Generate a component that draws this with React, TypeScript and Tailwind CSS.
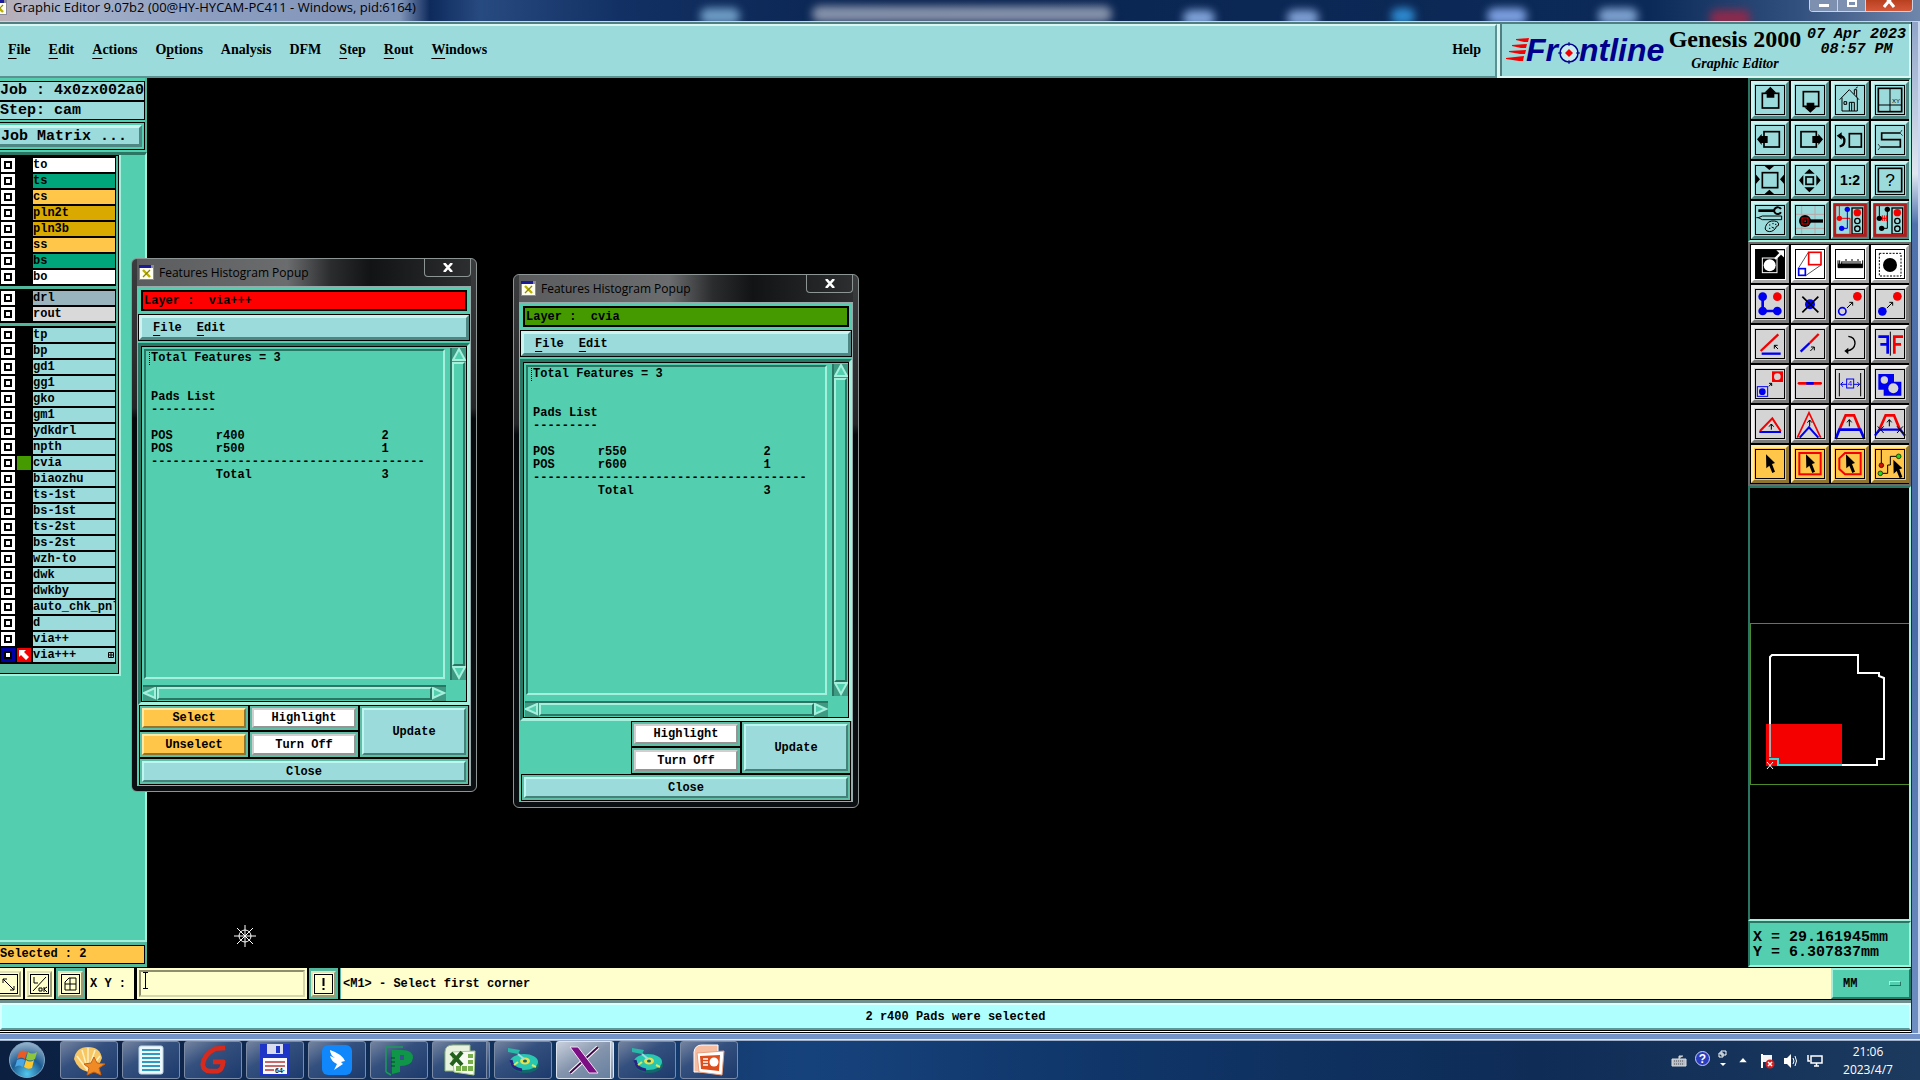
import React from "react";

const MONO = "font-['Liberation_Mono',monospace] font-bold";
const SERIF = "font-['Liberation_Serif',serif] font-bold";
const SANS = "font-['Open_Sans',sans-serif]";

const BEVEL_CYAN =
  "bg-[#9cdbdb] border-[3px] border-t-[#cdf3ee] border-l-[#cdf3ee] border-b-[#4d8683] border-r-[#4d8683]";

/* ---------- title bar and menu ---------- */

function XIcon() {
  return (
    <svg width="15" height="15" viewBox="0 0 15 15" className="shrink-0">
      <rect x="0" y="0" width="15" height="15" fill="#8a8a9a" />
      <rect x="1" y="3" width="13" height="11" fill="#fdfdf2" />
      <rect x="0" y="0" width="12" height="3" fill="#1a1a9a" />
      <path d="M4 5 L11 12" stroke="#b8b000" strokeWidth="2.4" />
      <path d="M11 5 L4 12" stroke="#8c8600" strokeWidth="1.2" />
    </svg>
  );
}

function TitleBar() {
  return (
    <header className="relative flex h-[22px] shrink-0 items-start overflow-hidden border-b border-[#c9d2e6] bg-[linear-gradient(90deg,#b9aeb6_0px,#a9b4cb_60px,#8d9ec0_200px,#8094b8_400px,#0e2a5c_430px,#274a80_480px,#123063_620px,#0a2450_900px,#0b2754_1250px,#0c2a58_1650px,#33517f_1800px,#6f86ab_1920px)]">
      <div className="pointer-events-none absolute inset-0 flex items-start justify-between pl-[700px] pr-[170px] blur-[4px]">
        <i className="mt-[8px] h-4 w-10 rounded-full bg-[#6d9bc4]" />
        <i className="mt-[6px] h-4 w-[300px] rounded-full bg-[#8793ab]" />
        <i className="mt-[10px] h-4 w-8 rounded-full bg-[#7fa2d8]" />
        <i className="mt-[10px] h-4 w-8 rounded-full bg-[#7f9fd4]" />
        <i className="mt-[8px] h-4 w-6 rounded-full bg-[#2e8ad0]" />
        <i className="mt-[8px] h-4 w-10 rounded-full bg-[#7c9fe0]" />
        <i className="mt-[8px] h-4 w-10 rounded-full bg-[#7ca0cf]" />
        <i className="mt-[10px] h-4 w-10 rounded-md bg-[#8c2a4c]" />
      </div>
      <div className="relative -ml-2 flex items-center gap-[6px]">
        <XIcon />
        <span className={`${SANS} text-[13px] leading-[13px] text-black`}>
          Graphic Editor 9.07b2 (00@HY-HYCAM-PC411 - Windows, pid:6164)
        </span>
      </div>
      <div className="relative ml-auto mr-[7px] flex h-[12px] overflow-hidden rounded-b border border-t-0 border-[#c9d4e6]">
        <button aria-label="Minimize" className="flex w-7 items-center justify-center border-r border-[#c9d4e6] bg-[#7d90b0]">
          <i className="h-[3px] w-[10px] bg-white" />
        </button>
        <button aria-label="Maximize" className="flex w-7 items-start justify-center border-r border-[#c9d4e6] bg-[#7d90b0]">
          <i className="h-[7px] w-[10px] border-2 border-white" />
        </button>
        <button aria-label="Close window" className="flex w-[46px] items-start justify-center bg-[linear-gradient(#b8401f,#d4583a)]">
          <svg width="12" height="8" viewBox="0 0 12 8"><path d="M1 7 L10 -4 M2 -4 L11 7" stroke="#fff" strokeWidth="3" /></svg>
        </button>
      </div>
    </header>
  );
}

const MENUS: [string, string, string][] = [
  ["", "F", "ile"],
  ["", "E", "dit"],
  ["", "A", "ctions"],
  ["O", "p", "tions"],
  ["Analysis", "", ""],
  ["DFM", "", ""],
  ["", "S", "tep"],
  ["", "R", "out"],
  ["", "W", "indows"],
];

function FrontlineLogo() {
  return (
    <svg width="160" height="32" viewBox="0 -2 160 32" aria-label="Frontline" className="shrink-0 overflow-visible">
      <g fill="#f40000">
        <path d="M10 3 L23 2 L22 6 L18 6 L10 4 Z" />
        <path d="M6 9 L21 8 L20 12 L15 12 L6 10 Z" />
        <path d="M3 15 L20 14 L19 18 L14 18 L3 16 Z" />
        <path d="M0 22 L18 20 L17 25 L13 25 L0 23 Z" />
      </g>
      <g fill="#00008c" fontFamily="Liberation Sans, sans-serif" fontWeight="bold" fontStyle="italic" fontSize="32">
        <text x="20" y="25">Fr</text>
        <text x="73" y="25">ntline</text>
      </g>
      <circle cx="63" cy="17" r="9" fill="#c8eef0" stroke="#00008c" strokeWidth="1.5" />
      <path d="M63 13 L67 17 L63 21 L59 17 Z" fill="#f40000" />
      <path d="M63 6 V10 M63 24 V28 M52 17 H56 M70 17 H74" stroke="#00008c" />
    </svg>
  );
}

function MenuBar() {
  return (
    <div className="flex h-[56px] shrink-0 border-t-2 border-[#4f7f80] bg-[#9cdbdb]">
      <nav className={`${SERIF} flex flex-1 items-center gap-[18px] border-y-2 border-r-2 border-t-[#d9f6f3] border-b-[#5b9190] border-r-[#5b9190] pb-[4px] pl-[8px] pr-[14px] text-[14px] text-black`}>
        {MENUS.map(([a, u, b]) => (
          <button key={a + u + b}>
            {a}
            <span className="underline decoration-1 underline-offset-[4px]">{u}</span>
            {b}
          </button>
        ))}
        <button className="ml-auto">Help</button>
      </nav>
      <div className="flex w-[414px] items-center border-l-[3px] border-r-2 border-b-2 border-[#d9f6f3]">
        <div className="flex h-full flex-1 items-center border-l-2 border-[#4f7f80] pl-[4px]">
          <FrontlineLogo />
          <div className="flex w-[138px] flex-col items-center text-black">
            <span className={`${SERIF} whitespace-nowrap text-[24px] leading-[28px]`}>Genesis 2000</span>
            <span className={`${SERIF} text-[14px] italic leading-[22px]`}>Graphic Editor</span>
          </div>
          <div className={`${MONO} mb-auto mt-[3px] flex flex-1 flex-col items-center whitespace-nowrap text-[15px] italic leading-[15px] text-black`}>
            <span>07 Apr 2023</span>
            <span>08:57 PM</span>
          </div>
        </div>
      </div>
    </div>
  );
}

/* ---------- layer list ---------- */

type Layer = { name: string; color: string; swatch?: string; active?: boolean };
const C = "bg-[#9cdbdb]";
const GROUPS: Layer[][] = [
  [
    { name: "to", color: "bg-white" },
    { name: "ts", color: "bg-[#00a57c]" },
    { name: "cs", color: "bg-[#ffc64a]" },
    { name: "pln2t", color: "bg-[#daa900]" },
    { name: "pln3b", color: "bg-[#daa900]" },
    { name: "ss", color: "bg-[#ffc64a]" },
    { name: "bs", color: "bg-[#00a57c]" },
    { name: "bo", color: "bg-white" },
  ],
  [
    { name: "drl", color: "bg-[#9ab4be]" },
    { name: "rout", color: "bg-[#d9d9d9]" },
  ],
  [
    ...["tp", "bp", "gd1", "gg1", "gko", "gm1", "ydkdrl", "npth"].map((name) => ({ name, color: C })),
    { name: "cvia", color: C, swatch: "bg-[#459a00]" },
    ...["biaozhu", "ts-1st", "bs-1st", "ts-2st", "bs-2st", "wzh-to", "dwk", "dwkby", "auto_chk_pnl", "d", "via++"].map(
      (name) => ({ name, color: C }),
    ),
    { name: "via+++", color: C, active: true },
  ],
];

function LayerRow({ layer }: { layer: Layer }) {
  return (
    <label className="flex h-[16px] items-center bg-black pl-px">
      <input
        type="checkbox"
        className={`h-[14px] w-[14px] shrink-0 appearance-none border-[3px] shadow-[inset_0_0_0_2px_#000] ${
          layer.active ? "border-[#0000a8] bg-white" : "border-white bg-white"
        }`}
      />
      <span className={`mx-[2px] flex h-[14px] w-[14px] shrink-0 items-center justify-center ${layer.active ? "bg-[#f40000]" : layer.swatch ?? ""}`}>
        {layer.active && (
          <svg width="12" height="12" viewBox="0 0 12 12">
            <path d="M1 1 H8 L6 3 L11 8 L8 11 L3 6 L1 8 Z" fill="#fff" />
          </svg>
        )}
      </span>
      <span className={`flex h-[14px] w-[82px] items-center justify-between overflow-hidden whitespace-nowrap ${layer.color}`}>
        {layer.name}
        {layer.active && (
          <svg width="6" height="6" viewBox="0 0 6 6" className="mr-[1px] shrink-0">
            <path d="M0.5 0.5 H5.5 V5.5 H0.5 Z M3 0 V6 M0 3 H6" fill="none" stroke="#000" />
          </svg>
        )}
      </span>
    </label>
  );
}

function Sidebar() {
  return (
    <aside className={`${MONO} flex w-[147px] shrink-0 flex-col bg-[#53cfaf] text-black`}>
      <div className="flex flex-col border-r-2 border-[#53b79d] pt-[3px] text-[15px]">
        <div className="h-[20px] whitespace-nowrap border border-l-0 border-black bg-[#9cdbdb] pr-[2px] text-right leading-[18px]">Job : 4x0zx002a0</div>
        <div className="h-[19px] border border-l-0 border-black bg-[#9cdbdb] leading-[17px]">Step: cam</div>
        <div className="mt-[2px] border border-l-0 border-black bg-[#53cfaf] py-[2px] pr-[2px]">
          <button className={`${BEVEL_CYAN} block h-[22px] w-full whitespace-pre border-l-0 pl-[1px] text-left leading-[17px]`}>
            Job Matrix ...
          </button>
        </div>
      </div>
      <div className="mt-[2px] flex flex-1 flex-col border-r-2 border-t-[3px] border-t-[#2a7564] border-r-[#a5f0dc] border-b-2 border-b-[#a5f0dc]">
        <div className="w-[121px] border-b-2 border-r-2 border-[#a5f0dc]">
          <div className="flex flex-col gap-[3px] border-b border-r border-t border-black bg-[#53b79d] pb-[9px] pr-[2px] text-[12px] leading-[14px]">
            {GROUPS.map((g, i) => (
              <div key={i} className="border-y border-black">
                {g.map((l) => (
                  <LayerRow key={l.name} layer={l} />
                ))}
              </div>
            ))}
          </div>
        </div>
      </div>
      <div className="border-b-[3px] border-r-2 border-t-[3px] border-[#53b79d]">
        <div className="h-[19px] border border-l-0 border-black bg-[#ffc64a] text-[12px] leading-[16px]">Selected : 2</div>
      </div>
    </aside>
  );
}

/* ---------- tool buttons ---------- */

const R = "#f40000";
const B = "#0000f0";
const K = "#000";

const Cursor = ({ x = 0, y = 0 }: { x?: number; y?: number }) => (
  <path transform={`translate(${x} ${y})`} d="M33 16 L60 42 L51 45 L60 68 L52 72 L43 50 L34 58 Z" fill={K} />
);
const SmallArrow = ({ d, head }: { d: string; head: string }) => (
  <g stroke={K} strokeWidth="3" fill="none">
    <path d={d} />
    <path d={head} />
  </g>
);
const Lights = () => (
  <g stroke={K} strokeWidth="4" fill="none">
    <rect x="51" y="9" width="32" height="78" />
    <circle cx="67" cy="23" r="11" fill={R} stroke="none" />
    <circle cx="67" cy="48" r="8" />
    <circle cx="67" cy="71" r="8" />
  </g>
);
const UpArrow = ({ x, y1, y2 }: { x: number; y1: number; y2: number }) => (
  <path d={`M${x} ${y1} V${y2} M${x - 7} ${y2 + 8} L${x} ${y2} L${x + 7} ${y2 + 8}`} stroke={K} strokeWidth="3" fill="none" />
);

const VIEW_ICONS: [string, React.ReactNode][] = [
  ["Pan up", <><rect x="22" y="25" width="49" height="44" fill="none" stroke={K} strokeWidth="5" /><path d="M46 5 L64 23 H58 V38 H35 V23 H28 Z" /></>],
  ["Pan down", <><rect x="25" y="20" width="46" height="44" fill="none" stroke={K} strokeWidth="5" /><path d="M46 83 L64 67 H58 V53 H35 V67 H28 Z" /></>],
  ["Home", <g fill="none" stroke={K} strokeWidth="3"><path d="M14 44 L43 14 L72 44 M21 38 V78 H67 V38 M43 78 V52 H58 V78 M27 50 h8 v8 h-8 Z M58 28 V14 H65 V36 M62 10 l6 -4 M50 52 V78" /></g>],
  ["Grid view", <g fill="none" stroke={K} strokeWidth="5"><rect x="10" y="10" width="70" height="70" /><path d="M45 10 V80 M10 60 H80" strokeWidth="3" /><text x="51" y="54" fontSize="18" fill={K} stroke="none" fontFamily="Liberation Sans">XY</text></g>],
  ["Pan left", <><rect x="27" y="20" width="46" height="46" fill="none" stroke={K} strokeWidth="5" /><path d="M6 43 L20 27 V33 H38 V54 H20 V60 Z" /></>],
  ["Pan right", <><rect x="18" y="20" width="46" height="46" fill="none" stroke={K} strokeWidth="5" /><path d="M84 43 L70 27 V33 H52 V54 H70 V60 Z" /></>],
  ["Previous view", <g fill="none" stroke={K}><rect x="43" y="26" width="36" height="40" strokeWidth="5" /><path d="M12 33 Q30 33 28 50 Q27 62 14 64" strokeWidth="7" /><path d="M5 32 L20 22 V44 Z" fill={K} stroke="none" /></g>],
  ["Snake pan", <g fill="none" stroke={K}><path d="M75 24 H20 V44 H76 V66 H16" strokeWidth="5" /><path d="M75 24 L81 15 M75 24 L83 32 M16 66 L9 57 M16 66 L9 75" strokeWidth="2" /></g>],
  ["Zoom out", <><rect x="22" y="23" width="46" height="45" fill="none" stroke={K} strokeWidth="5" /><path d="M28 2 H58 L43 15 Z M28 88 H58 L43 74 Z M2 28 V58 L15 43 Z M88 28 V58 L75 43 Z" /></>],
  ["Zoom in", <><rect x="33" y="36" width="22" height="22" fill="none" stroke={K} strokeWidth="5" /><path d="M43 12 L59 26 H28 Z M28 67 H59 L43 82 Z M12 46 L25 30 V62 Z M77 46 L64 30 V62 Z" /></>],
  ["Zoom 1:2", <text x="45" y="60" textAnchor="middle" fontSize="42" fontWeight="bold" fontFamily="Liberation Sans">1:2</text>],
  ["Help", <><rect x="10" y="10" width="70" height="70" fill="none" stroke={K} strokeWidth="5" /><text x="45" y="64" textAnchor="middle" fontSize="52" fontFamily="Liberation Sans">?</text></>],
  ["Tools", <g fill="none" stroke={K} strokeWidth="3"><path d="M10 17 H58" strokeWidth="8" /><path d="M78 12 A11 10 0 1 0 78 22" strokeWidth="6" /><path d="M10 38 L22 33 H80 V44 H22 Z M4 38 H12" /><path d="M32 64 Q38 46 58 48 Q74 50 70 62 Q62 62 62 70 Q50 84 36 78 Q28 74 32 64 Z" /><path d="M42 60 h4 M52 56 h4 M60 58 h4 M42 70 h4 M50 66 l8 4" /></g>],
  ["Measure", <><path d="M20 0 V90 M60 0 V90 M0 28 H90 M0 70 H90" stroke="#b9a6a6" strokeWidth="3" /><circle cx="30" cy="48" r="18" /><path d="M45 48 H84" stroke={K} strokeWidth="10" /><rect x="21" y="39" width="18" height="18" fill="none" stroke={R} strokeWidth="3" /><rect x="28" y="46" width="5" height="5" fill={R} /></>],
  ["Net colors", <><path d="M13 0 V40 H45 V90" stroke={R} strokeWidth="3" fill="none" /><path d="M37 13 V70 H20" stroke={B} strokeWidth="3" fill="none" /><circle cx="37" cy="13" r="8" fill={B} /><circle cx="13" cy="40" r="8" fill={R} /><circle cx="20" cy="70" r="8" fill={B} /><Lights /></>],
  ["Net shorts", <><path d="M13 0 V40 M37 13 V70 H20" stroke={K} strokeWidth="3" fill="none" /><path d="M13 40 H34 M22 31 V48 M28 31 V48 M34 31 V48" stroke={R} strokeWidth="3" /><circle cx="37" cy="13" r="8" /><circle cx="13" cy="40" r="8" /><circle cx="20" cy="70" r="8" /><Lights /></>],
];

const EDIT_ICONS: [string, React.ReactNode][] = [
  ["Contrast", <><rect width="90" height="90" /><rect x="22" y="27" width="44" height="44" fill="none" stroke="#fff" strokeWidth="3" /><circle cx="44" cy="49" r="18" fill="#fff" /><path d="M60 30 L76 14" stroke="#fff" strokeWidth="7" /><path d="M64 4 H88 V26 Z" fill="#fff" /></>],
  ["Resize", <><path d="M10 58 L40 10 M32 80 L78 48" stroke={K} strokeWidth="2" /><rect x="11" y="59" width="20" height="20" fill="none" stroke={B} strokeWidth="5" /><rect x="41" y="10" width="37" height="37" fill="none" stroke={R} strokeWidth="5" /></>],
  ["Ruler", <><path d="M9 34 V56 H83 V34 M14 34 V56 M20 40 V56" stroke={K} strokeWidth="3" fill="none" /><rect x="9" y="44" width="74" height="12" /><path d="M21 36 V46 M27 36 V46 M33 30 V46 M39 36 V46 M45 36 V46 M51 30 V46 M57 36 V46 M63 36 V46 M69 30 V46 M75 36 V46" stroke={K} strokeWidth="3" /></>],
  ["Pad select", <><rect x="13" y="13" width="65" height="68" fill="none" stroke={K} strokeWidth="3" strokeDasharray="6 4" /><circle cx="45" cy="48" r="21" /></>],
  ["Copy pads", <><path d="M23 23 V66 H67" stroke={B} strokeWidth="8" fill="none" /><circle cx="23" cy="23" r="13" fill={B} /><circle cx="23" cy="66" r="13" fill={B} /><circle cx="67" cy="66" r="13" fill={B} /><circle cx="67" cy="23" r="13" fill={R} /></>],
  ["Delete", <><circle cx="45" cy="46" r="15" fill={B} /><path d="M22 23 L70 70 M70 23 L22 70" stroke={K} strokeWidth="5" /></>],
  ["Move", <><circle cx="22" cy="67" r="11" fill="none" stroke={B} strokeWidth="5" /><circle cx="67" cy="22" r="13" fill={R} /><SmallArrow d="M36 57 L53 40" head="M43 40 H53 V50" /></>],
  ["Copy", <><circle cx="22" cy="67" r="13" fill={B} /><circle cx="67" cy="22" r="13" fill={R} /><SmallArrow d="M36 57 L53 40" head="M43 40 H53 V50" /></>],
  ["Rotate", <><path d="M17 66 L70 16" stroke={R} strokeWidth="7" /><path d="M20 74 H77" stroke={B} strokeWidth="7" /><SmallArrow d="M69 60 L58 49" head="M58 59 V49 H68" /></>],
  ["Stretch", <><path d="M17 68 L44 42" stroke={B} strokeWidth="7" /><path d="M44 42 L71 15" stroke={R} strokeWidth="7" /><SmallArrow d="M46 66 L58 54" head="M48 54 H58 V64" /></>],
  ["Undo", <><path d="M40 22 Q60 24 60 44 Q58 62 36 66" fill="none" stroke={K} strokeWidth="4" /><path d="M28 66 L40 56 V76 Z" /></>],
  ["Mirror", <><path d="M10 23 H38 V74 M16 46 H38" stroke={B} strokeWidth="8" fill="none" /><path d="M46 8 V80" stroke={K} strokeWidth="3" /><path d="M84 23 H58 V74 M58 46 H78" stroke={R} strokeWidth="8" fill="none" /></>],
  ["Substitute", <><rect x="7" y="53" width="31" height="29" fill="none" stroke={B} strokeWidth="3" /><circle cx="22" cy="68" r="10" fill={B} /><rect x="51" y="7" width="33" height="32" fill={R} /><circle cx="67" cy="23" r="10" fill="#d4d4d4" /><SmallArrow d="M42 52 L50 43" head="M42 43 H50 V51" /></>],
  ["Merge lines", <><path d="M12 43 H77" stroke={R} strokeWidth="8" strokeLinecap="round" /><path d="M34 43 H56" stroke={B} strokeWidth="8" /></>],
  ["Spacing", <><path d="M13 12 V82 M77 12 V82" stroke={K} strokeWidth="3" /><g stroke={B} strokeWidth="3" fill="none"><rect x="35" y="30" width="21" height="27" /><path d="M17 46 H35 M56 46 H74 M24 39 L17 46 L24 53 M67 39 L74 46 L67 53" /></g><text x="45" y="52" fontSize="24" textAnchor="middle" fill={B} fontFamily="Liberation Sans">4</text></>],
  ["Surface", <><path d="M10 15 H57 V38 H79 V80 H26 V62 H10 Z" fill={B} /><circle cx="28" cy="33" r="11" fill="#d4d4d4" /><circle cx="55" cy="58" r="15" fill="#d4d4d4" /></>],
  ["Move line", <><path d="M15 66 L52 28 L77 66" stroke={R} strokeWidth="6" fill="none" /><path d="M13 69 H78" stroke={B} strokeWidth="6" /><UpArrow x={49} y1={62} y2={45} /></>],
  ["Move corner", <><path d="M7 86 L42 11 L77 86" stroke={R} strokeWidth="5" fill="none" /><path d="M14 86 L42 55 L70 86" stroke={B} strokeWidth="6" fill="none" /><UpArrow x={44} y1={52} y2={33} /></>],
  ["Parallel line", <><path d="M14 60 L32 19 H57 L74 60" stroke={R} strokeWidth="8" fill="none" /><path d="M2 90 L13 62 H76 L88 90" stroke={B} strokeWidth="8" fill="none" /><UpArrow x={43} y1={52} y2={32} /></>],
  ["Parallel split", <><path d="M14 60 L32 19 H57 L74 60" stroke={R} strokeWidth="8" fill="none" /><path d="M0 80 L13 62 H76 L90 80" stroke={B} strokeWidth="7" fill="none" /><path d="M8 52 L26 72 M26 52 L8 72 M66 52 L84 72 M84 52 L66 72" stroke={K} strokeWidth="3" /><UpArrow x={43} y1={52} y2={32} /></>],
  ["Select", <Cursor />],
  ["Select by box", <><rect x="13" y="12" width="64" height="64" fill="none" stroke={R} strokeWidth="6" /><Cursor /></>],
  ["Select by polygon", <><path d="M30 12 H77 V76 H30 L13 60 V28 Z" fill="none" stroke={R} strokeWidth="6" /><Cursor /></>],
  ["Select net", <><path d="M19 0 V44 M63 22 H46 V48 H38 V73 H24" stroke={K} strokeWidth="3" fill="none" /><circle cx="19" cy="49" r="7" fill="#d01000" stroke={K} strokeWidth="2" /><circle cx="71" cy="22" r="7" fill="#22d522" stroke={K} strokeWidth="2" /><circle cx="16" cy="73" r="7" fill="#22d522" stroke={K} strokeWidth="2" /><Cursor x={22} y={16} /></>],
];

const TONE = {
  cyan: "bg-[#9cdbdb] border-t-[#cdf3ee] border-l-[#cdf3ee] border-b-[#4d8683] border-r-[#4d8683]",
  white: "bg-white border-t-white border-l-white border-b-[#a8a8a8] border-r-[#a8a8a8]",
  gray: "bg-[#d4d4d4] border-t-[#f0f0f0] border-l-[#f0f0f0] border-b-[#7c7c7c] border-r-[#7c7c7c]",
  orange: "bg-[#ffc64a] border-t-[#ffeaa8] border-l-[#ffeaa8] border-b-[#8f7430] border-r-[#8f7430]",
};

function Tool({ label, tone, red, children }: { label: string; tone: keyof typeof TONE; red?: boolean; children: React.ReactNode }) {
  return (
    <button aria-label={label} className={`flex h-[38px] w-[38px] items-center justify-center border-[3px] ${TONE[tone]}`}>
      <svg width="30" height="30" viewBox="0 0 90 90" className="block overflow-visible">
        {children}
        <rect x="1.5" y="1.5" width="87" height="87" fill="none" stroke="#000" strokeWidth="3" />
        {red && <rect x="-1" y="-1" width="92" height="92" fill="none" stroke="#b01c1c" strokeWidth="9" />}
      </svg>
    </button>
  );
}

function RightPanel() {
  return (
    <aside className="flex w-[163px] shrink-0 flex-col bg-black">
      <div className="grid grid-cols-4 gap-[2px] border-2 border-l-[#2a7564] border-t-[#2a7564] border-b-[#a5f0dc] border-r-[#a5f0dc] bg-black py-px pl-px">
        {VIEW_ICONS.map(([label, icon], i) => (
          <Tool key={label} label={label} tone="cyan" red={i > 13}>{icon}</Tool>
        ))}
      </div>
      <div className="grid grid-cols-4 gap-[2px] border-2 border-[#6b6b6b] bg-black py-px pl-px">
        {EDIT_ICONS.map(([label, icon], i) => (
          <Tool key={label} label={label} tone={i < 4 ? "white" : i < 20 ? "gray" : "orange"}>{icon}</Tool>
        ))}
      </div>
      <div className="flex flex-1 flex-col justify-center border-l-2 border-r-2 border-t-2 border-b-2 border-l-[#2a7564] border-t-[#2a7564] border-b-[#a5f0dc] border-r-[#a5f0dc]">
        <div className="border-y border-l border-[#4c8a2c]">
          <svg width="158" height="160" viewBox="1 1 158 160" className="block">
            <rect x="16" y="101" width="76" height="42" fill="#f40000" />
            <path d="M20 134 V34 L22 32 H108 V50 H129 V53 L134 55 V136 H127 V142 H92" fill="none" stroke="#fff" strokeWidth="2" />
            <path d="M20 101 V134" stroke="#b4a8a8" strokeWidth="2" />
            <path d="M20 135 V136 H28 V142 H92" fill="none" stroke="#30dada" strokeWidth="2" />
            <path d="M17 139 L23 146 M23 139 L17 146" stroke="#fff" />
          </svg>
        </div>
      </div>
      <div className={`${MONO} border-2 border-l-[#2a7564] border-t-[#2a7564] border-b-[#a5f0dc] border-r-[#a5f0dc] bg-[#53cfaf] pb-[5px] pl-[3px] pt-[7px] text-[15px] leading-[15px] text-black`}>
        <div>X = 29.161945mm</div>
        <div>Y = 6.307837mm</div>
      </div>
    </aside>
  );
}

/* ---------- histogram popups ---------- */

function Tri({ d, className }: { d: string; className?: string }) {
  return (
    <svg width="14" height="14" viewBox="0 0 14 14" className={`shrink-0 ${className ?? ""}`}>
      <path d={d} fill="#53cfaf" stroke="#a5f0dc" strokeWidth="2" />
    </svg>
  );
}

function PushButton({ tone, children, className = "" }: { tone: "orange" | "white" | "cyan"; children: string; className?: string }) {
  const tones = {
    orange: "bg-[#ffc64a] border-t-[#ffeaa8] border-l-[#ffeaa8] border-b-[#94742c] border-r-[#94742c]",
    white: "bg-white border-t-[#cfcfcf] border-l-[#cfcfcf] border-b-[#959595] border-r-[#959595]",
    cyan: "bg-[#9cdbdb] border-t-[#bdf7f2] border-l-[#bdf7f2] border-b-[#458079] border-r-[#458079]",
  };
  return (
    <div className={`border border-black bg-[#5fbfa6] p-[2px] ${className}`}>
      <button className={`h-full w-full border-2 leading-[14px] ${tones[tone]}`}>{children}</button>
    </div>
  );
}

type Popup = { layer: string; bar: string; rows: [string, string][]; selectable: boolean; place: string };

function HistogramPopup({ layer, bar, rows, selectable, place }: Popup) {
  const row = (a: string, b: string, c: string) => a.padEnd(9) + b.padEnd(23) + c;
  const text = [
    "Total Features = 3",
    "",
    "",
    "Pads List",
    "---------",
    "",
    ...rows.map(([s, n]) => row("POS", s, n)),
    "-".repeat(38),
    row("", "Total", "3"),
  ].join("\n");
  return (
    <section className={`absolute flex h-[534px] w-[346px] flex-col rounded-[6px] border border-[#8d9494] bg-[linear-gradient(#3a3c3e,#232527_28%,#05080a_30%,#0c0f11)] px-[5px] pb-[5px] ${place}`}>
      <div className="flex h-[27px] shrink-0 items-center gap-[5px] bg-[linear-gradient(90deg,#5a5c5e,#6a6c6e_45%,#2a2c2e_58%,#121314_70%,#2c2e30)] pl-[2px]">
        <XIcon />
        <h2 className={`${SANS} text-[12px] text-black`}>Features Histogram Popup</h2>
        <button aria-label="Close popup" className="-mt-[9px] ml-auto flex h-[18px] w-[47px] items-center justify-center rounded-b border border-t-0 border-[#8d9494]">
          <svg width="10" height="9" viewBox="0 0 10 9"><path d="M1 0 L9 9 M9 0 L1 9" stroke="#fff" strokeWidth="2.6" /></svg>
        </button>
      </div>
      <div className={`${MONO} flex flex-1 flex-col border border-[#9aa] bg-[#53cfaf] text-[12px] text-black`}>
        <div className={`m-[3px] flex h-[21px] items-center whitespace-pre border-2 border-black pl-px ${bar}`}>{`Layer :  ${layer}`}</div>
        <div className="border border-black">
          <div className={`${BEVEL_CYAN} flex h-[25px] items-center gap-[15px] border-2 pl-[11px]`}>
            <button><span className="underline decoration-1 underline-offset-[4px]">F</span>ile</button>
            <button><span className="underline decoration-1 underline-offset-[4px]">E</span>dit</button>
          </div>
        </div>
        <div className="mt-[2px] flex-1 border-[3px] border-t-[#2a7564] border-l-[#2a7564] border-b-[#a5f0dc] border-r-[#a5f0dc]">
          <div className="grid h-full grid-cols-[1fr_15px] grid-rows-[1fr_15px] gap-x-[4px] gap-y-[5px] border border-black py-px pl-px pr-px">
            <pre id={layer} className={`${MONO} relative m-px border-2 border-l-[#2a7564] border-t-[#2a7564] border-b-[#a5f0dc] border-r-[#a5f0dc] pl-[5px] pt-px text-[12px] leading-[13px]`}>
              {text}
              <i className="absolute left-[3px] top-px h-[13px] border-l border-dotted border-black" />
            </pre>
            <div className="flex flex-col border-l-2 border-[#2a7564]" role="scrollbar" aria-label="Vertical scroll" aria-controls={layer} aria-valuenow={0}>
              <Tri d="M7 1 L13 12 H1 Z" className="bg-[#3f9a83]" />
              <div className="flex-1 border-2 border-l-[#a5f0dc] border-t-[#a5f0dc] border-b-[#2a7564] border-r-[#2a7564]" />
              <Tri d="M7 12 L13 1 H1 Z" className="bg-[#3f9a83]" />
            </div>
            <div className="flex border-t-2 border-[#2a7564]" role="scrollbar" aria-label="Horizontal scroll" aria-controls={layer} aria-valuenow={0}>
              <Tri d="M1 6 L12 1 V11 Z" className="bg-[#3f9a83]" />
              <div className="flex-1 border-2 border-l-[#a5f0dc] border-t-[#a5f0dc] border-b-[#2a7564] border-r-[#2a7564]" />
              <Tri d="M12 6 L1 1 V11 Z" className="bg-[#3f9a83]" />
            </div>
          </div>
        </div>
        <div className="grid shrink-0 grid-cols-3 grid-rows-[26px_27px_27px] pl-px pr-px">
          {selectable ? <PushButton tone="orange">Select</PushButton> : <span />}
          <PushButton tone="white">Highlight</PushButton>
          <PushButton tone="cyan" className="row-span-2">Update</PushButton>
          {selectable ? <PushButton tone="orange">Unselect</PushButton> : <span />}
          <PushButton tone="white">Turn Off</PushButton>
          <PushButton tone="cyan" className="col-span-3">Close</PushButton>
        </div>
      </div>
    </section>
  );
}

/* ---------- bottom bars ---------- */

function IconCell({ label, teal, children }: { label: string; teal?: boolean; children: React.ReactNode }) {
  return (
    <div className={`flex h-full w-[31px] shrink-0 items-center justify-center border-r-2 border-black ${teal ? "bg-[#53b79d]" : "bg-[#ffffce]"}`}>
      <button aria-label={label} className="border-2 border-l-[#e2e2b8] border-t-[#e2e2b8] border-b-[#9a9a78] border-r-[#9a9a78] bg-[#ffffce] p-px">
        <svg width="19" height="20" viewBox="0 0 19 20" className="block" fill="none" stroke="#000">
          <rect x="0.5" y="0.5" width="18" height="19" />
          {children}
        </svg>
      </button>
    </div>
  );
}

function CommandBar() {
  return (
    <div className={`${MONO} flex h-[33px] shrink-0 items-stretch border-y border-black bg-[#ffffce] text-[12px] text-black`}>
      <div className="-ml-[6px] flex">
        <IconCell label="Line snap"><path d="M4 5 L15 16 M4 9 V5 H8 M15 12 V16 H11" /></IconCell>
        <IconCell label="Angle snap"><path d="M3 17 L16 3 M4 3 V9 H8 M9 14 h3 v3 h-3 Z M14 13 V18 M17 13 L14 15 L17 18" /></IconCell>
        <IconCell label="Grid snap" teal><path d="M4 16 V8 L8 4 H15 V16 Z M9 4 V16 M4 10 H15" /></IconCell>
      </div>
      <label htmlFor="xy" className="flex w-[48px] items-center whitespace-pre border-r border-black pl-[3px] text-[12px]">X Y :</label>
      <div className="relative flex w-[174px] border-l-2 border-r-2 border-black p-[2px]">
        <input id="xy" className="w-full border-2 border-l-[#8f8f70] border-t-[#8f8f70] border-b-[#d8d8ae] border-r-[#d8d8ae] bg-[#ffffce] px-1 outline-none" />
        <svg width="7" height="17" viewBox="0 0 7 17" className="pointer-events-none absolute left-[5px] top-[4px]" fill="none" stroke="#000">
          <path d="M1 0.5 H6 M1 16.5 H6 M3.5 0.5 V16.500" />
        </svg>
      </div>
      <IconCell label="Alert" teal><path d="M9.500 4 V12 M9.500 14 V16" strokeWidth="2" /></IconCell>
      <div className="flex flex-1 items-center border-l border-[#53b79d] pl-[2px]">&lt;M1&gt; - Select first corner</div>
      <button className="flex w-[80px] items-center justify-between border-2 border-l-[#a5f0dc] border-t-[#a5f0dc] border-b-[#2a7564] border-r-[#2a7564] bg-[#53cfaf] pl-[10px] pr-[8px]">
        MM
        <i className="h-[5px] w-[12px] border border-l-[#a5f0dc] border-t-[#a5f0dc] border-b-[#2a7564] border-r-[#2a7564]" />
      </button>
    </div>
  );
}

const Disc = () => (
  <svg width="34" height="30" viewBox="0 0 34 30">
    <ellipse cx="19" cy="20" rx="14" ry="8" fill="#12686a" />
    <ellipse cx="18" cy="17" rx="14" ry="8" fill="#28c7b2" />
    <path d="M5 15 Q6 24 16 25" stroke="#2a2480" strokeWidth="3" fill="none" />
    <ellipse cx="19" cy="16" rx="5" ry="3.500" fill="#e9e04a" />
    <ellipse cx="19" cy="16" rx="2" ry="1.500" fill="#12686a" />
    <path d="M2 3 L14 5 L12 9 L2 7 Z" fill="#28b8a8" />
    <path d="M12 9 L18 14" stroke="#9adfe0" strokeWidth="2" />
    <path d="M8 20 L12 17 M26 20 L30 22" stroke="#d7e860" strokeWidth="2" />
  </svg>
);

const TASKS: [string, string, React.ReactNode][] = [
  ["Shells", "", <svg width="34" height="32" viewBox="0 0 34 32"><path d="M2 15 Q4 3 16 3 Q28 3 30 14 Q26 26 16 28 Q6 26 2 15 Z" fill="#f7c765" /><path d="M16 27 L5 12 M16 27 L10 6 M16 27 V4 M16 27 L23 6 M16 27 L28 12" stroke="#fff0c0" strokeWidth="1.500" /><path d="M22 13 L25 19 L33 20 L27 24 L29 31 L22 28 L15 31 L17 24 L12 20 L19 19 Z" fill="#f08a24" stroke="#c65f10" /></svg>],
  ["Notes", "", <svg width="28" height="32" viewBox="0 0 28 32"><rect x="2" y="2" width="24" height="28" rx="2" fill="#eef8fc" stroke="#bcd8e6" /><path d="M5 6 H23 M5 10 H23 M5 14 H23 M5 18 H23 M5 22 H23 M5 26 H23" stroke="#2f9ac0" strokeWidth="2.200" /></svg>],
  ["G", "", <svg width="28" height="30" viewBox="0 0 30 32"><path d="M28 3 L17 4 Q5 10 4 21 Q5 28 12 28 H20 Q25 27 26 18 L15 18" fill="none" stroke="#d82a1c" strokeWidth="5" strokeLinejoin="round" /></svg>],
  ["Save", "", <svg width="32" height="34" viewBox="0 0 32 34"><rect x="1" y="1" width="30" height="32" fill="#1f35c8" /><rect x="8" y="1" width="16" height="10" fill="#d8dcee" /><rect x="17" y="3" width="4" height="7" fill="#1f35c8" /><rect x="4" y="15" width="24" height="16" fill="#fbfbfb" /><path d="M6 19 H26 M6 23 H26 M6 27 H15" stroke="#b83838" strokeWidth="1.500" /><text x="16" y="30" fontSize="7" fontWeight="bold" fontFamily="Liberation Sans" fill="#222">64·</text></svg>],
  ["Wing", "", <svg width="30" height="30" viewBox="0 0 30 30"><rect width="30" height="30" rx="6" fill="#1087fa" /><path d="M8 5 Q20 9 23 16 L19 17 L21 19 L12 25 L15 19 Q9 16 8 11 L13 13 Q8 10 8 5 Z" fill="#fff" /></svg>],
  ["P", "", <svg width="32" height="32" viewBox="0 0 32 32"><path d="M3 28 V3 H20 M3 28 L8 31" fill="none" stroke="#1a9a58" strokeWidth="1.500" /><path d="M9 6 H19 Q30 6 30 14 Q29 22 17 22 L17 28 L9 30 Z" fill="#0f9648" /><path d="M8 14 H12 M8 18 H12 M8 22 H12" stroke="#0a4030" /><path d="M17 11 h4 v5 h-4 Z" fill="#35548a" /></svg>],
  ["Excel", "stack", <svg width="32" height="32" viewBox="0 0 32 32"><path d="M1 8 Q1 1 9 1 H26 V27 H1 Z" fill="#e8f3df" stroke="#8db870" /><path d="M8 8 L31 7 L30 31 L10 28 Z" fill="#f8fbf4" stroke="#a8c890" /><path d="M24 10 h5 v4 h-5 Z M24 16 h5 v4 h-5 Z M12 22 h5 v5 h-5 Z M18 22 h5 v5 h-5 Z M24 22 h5 v5 h-5 Z" fill="#77b04a" /><path d="M7 9 L18 21 M18 8 L7 21" stroke="#22601c" strokeWidth="4" /></svg>],
  ["Disc one", "", <Disc />],
  ["X server", "active", <svg width="32" height="28" viewBox="0 0 32 28"><path d="M30 1 L2 27" stroke="#fff" strokeWidth="4" /><path d="M30 1 L2 27" stroke="#3a0a4a" strokeWidth="2" /><path d="M2 1 H10 L30 27 H21 Z" fill="#7d0f84" stroke="#f0e0f4" /></svg>],
  ["Disc two", "", <Disc />],
  ["PowerPoint", "", <svg width="32" height="32" viewBox="0 0 32 32"><path d="M1 8 Q2 1 9 1 H25 V28 H1 Z" fill="#f7bda0" stroke="#fff" /><path d="M4 9 L31 7 L29 31 L6 28 Z" fill="#fff" stroke="#e8a080" /><path d="M7 12 L27 11 L26 27 L8 25 Z" fill="#dd4e1c" /><circle cx="21" cy="18" r="4.500" fill="#fff" /><path d="M10 15 H15 M10 18 H15 M10 21 H15" stroke="#fff" strokeWidth="1.500" /></svg>],
];

function Taskbar() {
  return (
    <footer className="flex h-[40px] shrink-0 items-start border-t border-[#9fb0c8] bg-[linear-gradient(90deg,#0b1f40,#123462_30%,#16427c_42%,#0f3466_60%,#0e2c56_80%,#1c3a5e)]">
      <button aria-label="Start" className="mx-[8px] mt-px">
        <svg width="38" height="36" viewBox="0 0 38 36">
          <defs><radialGradient id="orb" cx="0.5" cy="0.9" r="0.9"><stop offset="0" stopColor="#52c8f0" /><stop offset="0.5" stopColor="#1c5c92" /><stop offset="1" stopColor="#9ab4cc" /></radialGradient></defs>
          <circle cx="19" cy="18" r="17.500" fill="url(#orb)" stroke="#7fa6c4" />
          <path d="M11 10 Q15 7 19 10 L17 17 Q13 14 9 17 Z" fill="#ea5a24" />
          <path d="M20 10 Q24 13 29 10 L27 17 Q22 20 18 17 Z" fill="#8cc63e" />
          <path d="M9 18 Q13 16 17 18 L15 25 Q11 22 7 25 Z" fill="#4aa6e4" />
          <path d="M18 18 Q22 21 26 18 L24 26 Q20 28 16 25 Z" fill="#fcc62e" />
        </svg>
      </button>
      <div className="ml-[6px] flex gap-[4px]">
        {TASKS.map(([label, kind, icon]) => (
          <button
            key={label}
            aria-label={label}
            className={`flex h-[38px] w-[58px] items-center justify-center rounded-[3px] border ${
              kind === "active"
                ? "border-[#dde4ee] bg-[linear-gradient(150deg,#c8d0dc,#8494ac_50%,#66809f)]"
                : "border-[#7b8ba6] bg-[linear-gradient(150deg,#7484a0,#34507e_40%,#1c3a6c)]"
            } ${kind ? "border-r-4 border-double" : ""}`}
          >
            {icon}
          </button>
        ))}
      </div>
      <div className="ml-auto flex h-full items-center gap-[8px] pr-[19px]">
        <svg width="16" height="12" viewBox="0 0 16 12"><path d="M1 4 H15 V11 H1 Z M8 4 V1 H12" fill="#b8bcc4" stroke="#ddd" /><path d="M3 6 H13 M3 9 H13" stroke="#555" strokeDasharray="1 1" /></svg>
        <svg width="15" height="15" viewBox="0 0 15 15" className="-mt-1"><circle cx="7.500" cy="7.500" r="7" fill="#2a3cc0" stroke="#c8d0f4" /><text x="7.500" y="12" fontSize="12" fontWeight="bold" textAnchor="middle" fill="#fff" fontFamily="Liberation Sans">?</text></svg>
        <svg width="9" height="18" viewBox="0 0 9 18" className="-mt-1"><path d="M3 1 H8 V5 H3 Z M1 3 H5 V7 H1 Z" fill="none" stroke="#fff" /><path d="M2 13 H8 L5 16 Z" fill="#fff" /></svg>
        <svg width="8" height="5" viewBox="0 0 9 6" className="mx-[4px]"><path d="M0 5 L4.500 0 L9 5 Z" fill="#fff" /></svg>
        <svg width="16" height="16" viewBox="0 0 16 16"><path d="M3 1 V15" stroke="#fff" strokeWidth="2" /><path d="M4 2 H13 V9 H4 Z" fill="#f4f4f4" /><circle cx="11" cy="11" r="4.500" fill="#d42020" /><path d="M9 9 L13 13 M13 9 L9 13" stroke="#fff" strokeWidth="1.500" /></svg>
        <svg width="16" height="16" viewBox="0 0 16 16"><path d="M1 5 H4 L8 1 V15 L4 11 H1 Z" fill="#fff" /><path d="M10 5 Q12 8 10 11 M12 3 Q15 8 12 13" stroke="#fff" fill="none" /></svg>
        <svg width="16" height="16" viewBox="0 0 16 16"><path d="M4 3 H15 V10 H4 Z M7 13 H12 M9.500 10 V13 M1 2 V8 H3" fill="none" stroke="#fff" strokeWidth="1.500" /></svg>
        <div className={`${SANS} ml-[4px] w-[66px] text-center text-[12px] leading-[18px] text-white`}>
          <div>21:06</div>
          <div>2023/4/7</div>
        </div>
      </div>
    </footer>
  );
}

export default function App() {
  return (
    <div className="flex h-screen w-full flex-col overflow-hidden bg-black">
      <TitleBar />
      <div className="flex min-h-0 flex-1">
        <div className="flex min-w-0 flex-1 flex-col">
          <MenuBar />
          <div className="relative flex min-h-0 flex-1">
            <Sidebar />
            <main className="flex-1 bg-black">
              <svg width="22" height="22" viewBox="0 0 22 22" className="absolute bottom-[20px] left-[234px]" fill="none" stroke="#fff">
                <circle cx="11" cy="11" r="6" />
                <path d="M11 0 V22 M0 11 H22 M3 3 L19 19 M19 3 L3 19" />
              </svg>
            </main>
            <RightPanel />
            <HistogramPopup layer="via+++" bar="bg-[#ff0000]" rows={[["r400", "2"], ["r500", "1"]]} selectable place="left-[131px] top-[180px]" />
            <HistogramPopup layer="cvia" bar="bg-[#459a00]" rows={[["r550", "2"], ["r600", "1"]]} selectable={false} place="left-[513px] top-[196px]" />
          </div>
          <CommandBar />
          <div className="h-[3px] shrink-0 bg-[#6f8f8f]" />
          <div className={`${MONO} flex h-[27px] shrink-0 items-center justify-center border-2 border-t-[#d9ffff] border-b-[#5b9a9a] border-x-[#d9ffff] bg-[#b0ffff] text-[12px] text-black`}>
            2 r400 Pads were selected
          </div>
          <div className="h-[3px] shrink-0 border-y border-y-black bg-white" />
        </div>
        <div className="w-[9px] shrink-0 border-l border-r-2 border-l-[#1a2a44] border-r-[#c9d8ee] bg-[linear-gradient(#8fa4c8_0%,#dfe6f0_15%,#4f72ac_20%,#4a6ca6_60%,#6f8fc2)]" />
      </div>
      <div className="h-[7px] shrink-0 border-y border-y-[#dfe6f0] bg-[#7392c8]" />
      <Taskbar />
    </div>
  );
}
